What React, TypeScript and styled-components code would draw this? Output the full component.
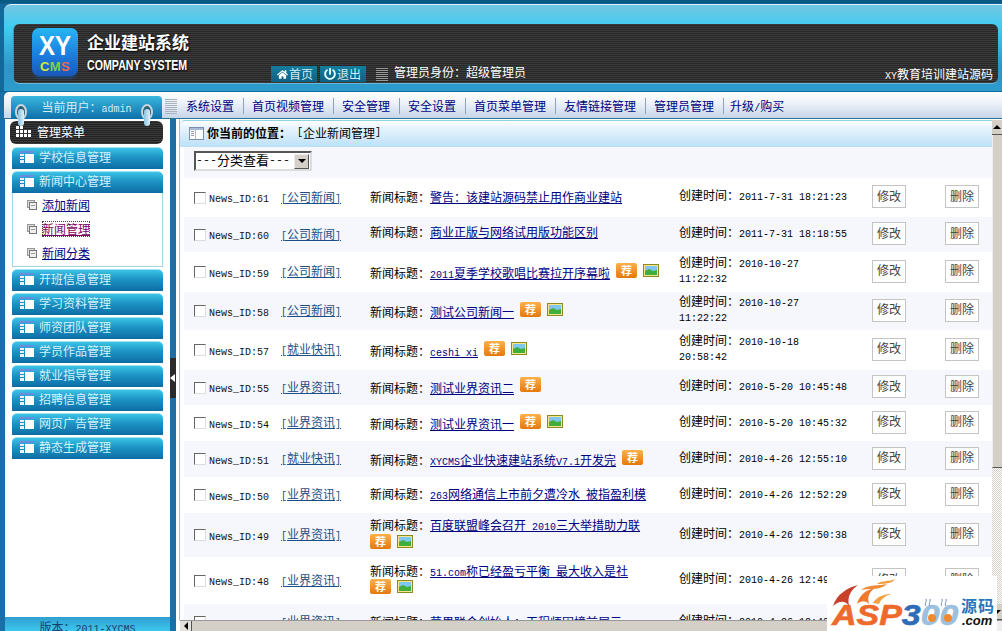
import React from "react";
import styled, { createGlobalStyle } from "styled-components";
import { FaHome, FaPowerOff } from "react-icons/fa";

const CJK = '"Noto Sans CJK SC", "Liberation Sans", sans-serif';

const Global = createGlobalStyle`
  html, body { margin: 0; padding: 0; height: 100%; overflow: hidden; background: #1b6fa8; }
  body { font: 12px/16px ${CJK}; color: #000; }
  * { box-sizing: border-box; }
`;

const Page = styled.div`
  position: relative; width: 1002px; height: 631px; overflow: hidden;
  display: flex; flex-direction: column; background: #1b6fa8;
`;

/* ---------- header ---------- */
const Header = styled.header`
  height: 92px; flex: none; padding-top: 4px;
  background: linear-gradient(#0a5a88 0, #0a5a88 3px, #14699c 4px, #14699c 100%);
`;
const HeaderPanel = styled.div`
  margin-left: 4px; height: 87px; padding: 19px 4px 7px 9px;
  border-radius: 7px 0 0 0; border-top: 1px solid #d8f3fb;
  background: linear-gradient(#74c6e2 0, #3fcdf1 22px, #2d95c8 62px, #2c9ccd 100%);
`;
const Band = styled.div`
  position: relative; height: 60px; display: flex; align-items: flex-end;
  border-radius: 6px; border-bottom: 1px solid #6bb7d8; border-left: 1px solid #4a8ca8;
  background: repeating-linear-gradient(0deg, #3b3b3b 0 1px, #272727 1px 2px);
`;
const Logo = styled.div`
  align-self: flex-start; margin: 4px 0 0 18px; width: 46px; height: 48px; flex: none;
  display: flex; flex-direction: column; align-items: center; border-radius: 7px;
  background: linear-gradient(#27b6f2 0, #1b7fe0 55%, #1a57b8 100%);
  font-family: "Liberation Sans", sans-serif; font-weight: 700;
  box-shadow: 0 5px 4px -3px #174f86;
`;
const LogoXY = styled.span`font-size: 24px; line-height: 29px; margin-top: 3px; color: #fff; transform: scaleY(1.15);`;
const LogoCMS = styled.span`font-size: 13px; line-height: 13px; letter-spacing: .4px;`;
const LogoLetter = styled.span<{ $c: string }>`color: ${p => p.$c};`;
const Brand = styled.div`
  align-self: flex-start; margin: 9px 0 0 9px; width: 104px; flex: none; color: #fff;
  text-shadow: 1px 1px 2px #000;
`;
const BrandCn = styled.div`font-size: 17px; line-height: 18px; font-weight: 700; white-space: nowrap;`;
const BrandEn = styled.div`
  margin-top: 6px; font: 700 15px/16px "Liberation Sans", sans-serif;
  transform: scaleX(.71); transform-origin: left; white-space: nowrap;
`;
const HeadButton = styled.a`
  display: flex; align-items: center; gap: 1px; width: 46px; height: 16px; margin-bottom: 1px;
  padding-left: 6px; color: #cdeefa; font-size: 12px;
  background: linear-gradient(#167d9d, #0d5f80);
`;
const HomeBtn = styled(HeadButton)`margin-left: 80px;`;
const ExitBtn = styled(HeadButton)`margin-left: 3px; padding-left: 4px;`;
const GripIcon = styled.svg`margin: 0 6px 2px 10px; flex: none;`;
const Role = styled.div`color: #fff; margin-bottom: 3px; white-space: nowrap;`;
const Slogan = styled.div`margin: 0 5px 1px auto; color: #fff; white-space: nowrap;`;

/* ---------- nav row ---------- */
const NavRow = styled.div`
  margin-left: 4px; height: 27px; flex: none; display: flex; align-items: flex-end;
  border-radius: 5px 0 0 0; position: relative;
  background: linear-gradient(#ffffff, #eef3f9 40%, #c7d5e8);
  border-bottom: 1px solid #2e7390;
`;
const UserTab = styled.div`
  position: relative; width: 151px; height: 23px; margin-left: 7px; flex: none; margin-bottom: -1px;
  border-radius: 4px 4px 0 0; text-align: center; color: #cfeefa; line-height: 21px;
  background: linear-gradient(#38b7e0, #0f6fa8);
`;
const Hook = styled.span<{ $left: number }>`
  position: absolute; left: ${p => p.$left}px; top: 8px; width: 12px; height: 22px; z-index: 2;
  &::before { content: ""; position: absolute; inset: 0 0 auto 0; height: 12px; border-radius: 50%;
    border: 2px solid #c8d4da; background: #2c5f78; }
  &::after { content: ""; position: absolute; left: 3px; top: 5px; width: 6px; height: 17px; border-radius: 3px;
    background: linear-gradient(90deg, #8cc2e0, #e0f0f8); }
`;
const NavGrip = styled.svg`flex: none; margin: 0 9px 4px 3px;`;
const NavList = styled.nav`display: flex; align-self: center; padding-top: 2px;`;
const NavItem = styled.a`
  color: #00007f; padding-right: 9px; margin-right: 8px; border-right: 1px solid #8fa3b8;
  white-space: nowrap; &:last-child { border: 0; margin-left: -2px; }
`;

/* ---------- body ---------- */
const Body = styled.div`flex: 1; min-height: 0; display: flex;`;
const Sidebar = styled.aside`
  width: 165px; margin-left: 5px; flex: none; background: #fff; display: flex; flex-direction: column; padding-top: 2px;
`;
const MenuHead = styled.div`
  width: 153px; height: 23px; margin: 0 0 3px 5px; flex: none; display: flex; align-items: center; gap: 5px;
  padding: 0 0 2px 6px; border-radius: 6px; color: #fff;
  background: repeating-linear-gradient(0deg, #3a3a3a 0 1px, #222 1px 2px);
`;
const MenuList = styled.div`flex: 1; margin-left: 7px; width: 151px; display: flex; flex-direction: column; gap: 2px;`;
const MenuItem = styled.div`
  height: 22px; flex: none; display: flex; align-items: center; gap: 5px; padding: 0 0 3px 8px;
  border-radius: 5px 5px 0 0; color: #d4f1fb; border-top: 1px solid #9fe3f5;
  background: linear-gradient(#3cc3e6, #1d93c4 45%, #0c6da5);
`;
const SubBox = styled.div`
  height: 74px; margin-top: -2px; padding: 0 0 0 14px; flex: none; background: #fff;
  border: 1px solid #a6d4e8; border-top: 0; display: flex; flex-direction: column;
`;
const SubItem = styled.div`height: 24px; display: flex; align-items: center; gap: 5px;`;
const SubLink = styled.a<{ $visited?: boolean }>`
  color: ${p => p.$visited ? "#800060" : "#00007f"}; text-decoration: underline;
  ${p => p.$visited && "outline: 1px dotted #444; outline-offset: -1px;"}
`;
const SideFoot = styled.div`
  height: 14px; flex: none; overflow: hidden; padding-top: 2px; text-align: center; color: #16406a; line-height: 16px;
  background: linear-gradient(#2f9fd0, #3cc7ee);
`;
const Rail = styled.div`width: 6px; flex: none; display: flex; align-items: center; padding-top: 5px;`;
const Collapse = styled.div`
  width: 6px; height: 40px; background: #2b2b2b; display: flex; align-items: center;
  &::before { content: ""; border: 4px solid transparent; border-left: 0; border-right: 5px solid #fff; }
`;
const Main = styled.main`flex: 1; min-width: 0; background: #fff; display: flex; flex-direction: column;`;
const MainTop = styled.div`flex: 1; min-height: 0; display: flex;`;
const Content = styled.div`
  flex: 1; min-width: 0; margin-left: 3px; border-left: 1px solid #b4bcc4; display: flex; flex-direction: column;
`;
const TitleBar = styled.div`
  height: 27px; margin-top: 1px; flex: none; display: flex; align-items: center; padding: 0 0 2px 9px; border-radius: 5px 0 0 0;
  background: linear-gradient(#fff, #e8f4fd 25%, #bce0f8); border-top: 1px solid #8fd4e8;
`;
const TitleIcon = styled.svg`flex: none; margin-right: 3px;`;
const Crumb = styled.strong`font-weight: 700; margin-right: 6px; font-size: 12px;`;
const List = styled.div`flex: 1; min-height: 0; overflow: hidden; margin-left: 4px;`;
const FilterRow = styled.div`height: 31px; background: #f5f7fd; padding: 4px 0 0 10px;`;
const Select = styled.div`
  width: 118px; height: 20px; display: flex; align-items: center; padding: 0 2px 2px 0;
  background: #fff; border: 2px solid; border-color: #555 #ddd #ddd #555; font-size: 13px; line-height: 16px; overflow: hidden;
  white-space: nowrap;
`;
const SelectDash = styled.span`font: 11.67px/16px "Liberation Mono", monospace;`;
const SelectArrow = styled.span`
  width: 15px; height: 15px; flex: none; margin: 2px -1px 0 auto; background: #d4d0c8; border: 1px solid; border-color: #eee #555 #555 #eee;
  display: flex; align-items: center; justify-content: center;
  &::after { content: ""; border: 4px solid transparent; border-top: 4px solid #000; border-bottom: 0; }
`;
const Row = styled.div<{ $h: number; $tint: boolean }>`
  height: ${p => p.$h}px; display: grid; align-items: center;
  grid-template-columns: 15px 72px 89px 309px 193px 73px 34px; padding-left: 10px;
  background: ${p => p.$tint ? "#f5f7fd" : "#fff"};
`;
const Check = styled.input.attrs({ type: "checkbox" })`
  appearance: none; margin: 0; width: 12px; height: 12px; background: #fff;
  border: 1px solid; border-color: #666 #ddd #ddd #666;
`;
const IdText = styled.span`
  font: 10px/12px "Liberation Mono", monospace; padding-top: 5px; color: #111; white-space: nowrap;
`;
const CatLink = styled.a`color: #1c4f86; text-decoration: underline; white-space: nowrap; margin-top: -2px;`;
const TitleCell = styled.div<{ $shift: number }>`
  width: 292px; line-height: 16px; margin-top: ${p => p.$shift}px;
`;
const TitleLink = styled.a`color: #00007f; text-decoration: underline;`;
const Lat = styled.span`font-family: "Liberation Mono", monospace; font-size: 10px; line-height: 1;`;
const BadgeWrap = styled.span<{ $own: boolean }>`
  display: inline-flex; align-items: center; gap: 6px; vertical-align: top; height: 16px; white-space: nowrap;
  margin-top: ${p => p.$own ? 0 : -3}px;
`;
const Rec = styled.span`
  width: 21px; height: 15px; border-radius: 2px; color: #fff; font-size: 11px; font-weight: 700; line-height: 15px; text-align: center;
  background: linear-gradient(#fbb14a, #e4780f);
`;
const TimeCell = styled.div`width: 170px; line-height: 14px; margin-top: -4px;`;
const ActionBtn = styled.a`
  width: 34px; height: 23px; display: flex; align-items: center; justify-content: center; padding-bottom: 2px; margin-top: -2px;
  background: #fff; border: 1px solid #c4c4c4; color: #444;
`;
const VScroll = styled.div`width: 10px; flex: none; display: flex; flex-direction: column; padding-top: 1px;`;
const ScrollBtn = styled.div<{ $h: number; $dir: "up" | "down" }>`
  height: ${p => p.$h}px; flex: none; background: #d4d0c8; display: flex; align-items: center; justify-content: center;
  border-bottom: 1px solid #555;
  &::after { content: ""; border: 4px solid transparent; border-${p => p.$dir === "up" ? "top" : "bottom"}: 0;
    border-${p => p.$dir === "up" ? "bottom" : "top"}: 4px solid #000; }
`;
const VThumb = styled.div`height: 333px; flex: none; background: #d4d0c8; border-left: 1px solid #eee; border-bottom: 1px solid #555;`;
const VTrack = styled.div`
  flex: 1; background: repeating-conic-gradient(#fff 0 25%, #d4d0c8 0 50%) 0 0 / 2px 2px;
`;
const HScroll = styled.div`
  height: 11px; flex: none; margin-left: 4px; display: flex; background: #d4d0c8; border-top: 1px solid #999;
`;
const HBtn = styled.div`
  width: 12px; flex: none; display: flex; align-items: center; justify-content: center; border-right: 1px solid #555; background: #e4e1da;
  &::after { content: ""; border: 4px solid transparent; border-left: 0; border-right: 4px solid #000; }
`;
const HCorner = styled.div`width: 10px; flex: none; background: #eee;`;
const HThumb = styled.div`flex: 1;`;

/* ---------- watermark ---------- */
const Mark = styled.div`
  position: absolute; right: 5px; bottom: 0; width: 170px; height: 55px; background: #fff; overflow: hidden;
  font-family: "Liberation Sans", sans-serif;
`;
const MarkFlame = styled.svg`position: absolute; left: 0; top: 0;`;
const MarkWord = styled.div`
  position: absolute; left: 5px; bottom: 3px; font-size: 29px; line-height: 26px; font-weight: 700; font-style: italic;
  white-space: nowrap; transform: scaleX(1.17); transform-origin: left; -webkit-text-stroke: .6px currentColor;
`;
const MarkAsp = styled.span`color: #ee6a2c;`;
const Mark3 = styled.span`color: #2f6cb8;`;
const Mark0 = styled.span`color: #9cc0de;`;
const MarkCn = styled.div`
  position: absolute; left: 134px; top: 19px; font: 700 16px/20px ${CJK}; color: #2a78bc; letter-spacing: 1px;
`;
const MarkCom = styled.div`
  position: absolute; left: 135px; bottom: 3px; font-size: 13px; line-height: 14px; font-weight: 700; font-style: italic; color: #111;
`;

const mixed = (t: string) =>
  t.split(/([\x20-\x7e]+)/).map((s, i) => (i % 2 ? <Lat key={i}>{s}</Lat> : s));

const BookIcon = () => (
  <svg width="14" height="12" viewBox="0 0 14 12" style={{ flex: "none" }}>
    <rect x="0" y="0" width="14" height="2" fill="#6f88e0" />
    <rect x="0" y="3" width="4" height="2" fill="#eef" />
    <rect x="0" y="6" width="4" height="2" fill="#eef" />
    <rect x="0" y="9" width="4" height="3" fill="#eef" />
    <rect x="5" y="3" width="9" height="9" fill="#fff" />
  </svg>
);
const SubIcon = () => (
  <svg width="10" height="10" viewBox="0 0 10 10" style={{ flex: "none" }}>
    <rect x=".5" y=".5" width="7" height="7" fill="#ddd" stroke="#999" />
    <rect x="2.5" y="2.5" width="7" height="7" fill="#eee" stroke="#777" />
    <rect x="4" y="5" width="4" height="1" fill="#999" />
  </svg>
);
const Grip = ({ c }: { c: string }) => (
  <>
    {[0, 2, 4, 6, 8, 10, 12].map(y => <rect key={y} x="0" y={y} width="12" height="1" fill={c} />)}
  </>
);
const PicIcon = () => (
  <svg width="16" height="13" viewBox="0 0 16 13" style={{ flex: "none" }}>
    <rect x=".5" y=".5" width="15" height="12" fill="#f6e58a" stroke="#8a8a20" />
    <rect x="2" y="2" width="12" height="5" fill="#7fc6f0" />
    <path d="M2 11V7l4-2 4 2 4-1v5z" fill="#3fae3c" />
  </svg>
);

type News = {
  id: string; cat: string; title: string; time: string; h: number; shift: number;
  rec?: boolean; pic?: boolean; ownLine?: boolean;
};
const news: News[] = [
  { id: "61", cat: "公司新闻", title: "警告：该建站源码禁止用作商业建站", time: "2011-7-31 18:21:23", h: 39, shift: -2 },
  { id: "60", cat: "公司新闻", title: "商业正版与网络试用版功能区别", time: "2011-7-31 18:18:55", h: 35, shift: -6 },
  { id: "59", cat: "公司新闻", title: "2011夏季学校歌唱比赛拉开序幕啦", time: "2010-10-27 11:22:32", h: 40, shift: 2, rec: true, pic: true },
  { id: "58", cat: "公司新闻", title: "测试公司新闻一", time: "2010-10-27 11:22:22", h: 38, shift: 2, rec: true, pic: true },
  { id: "57", cat: "就业快讯", title: "ceshi xi", time: "2010-10-18 20:58:42", h: 40, shift: 2, rec: true, pic: true },
  { id: "55", cat: "业界资讯", title: "测试业界资讯二", time: "2010-5-20 10:45:48", h: 35, shift: 0, rec: true },
  { id: "54", cat: "业界资讯", title: "测试业界资讯一", time: "2010-5-20 10:45:32", h: 36, shift: 2, rec: true, pic: true },
  { id: "51", cat: "就业快讯", title: "XYCMS企业快速建站系统V7.1开发完", time: "2010-4-26 12:55:10", h: 36, shift: 2, rec: true },
  { id: "50", cat: "业界资讯", title: "263网络通信上市前夕遭冷水 被指盈利模", time: "2010-4-26 12:52:29", h: 36, shift: -2 },
  { id: "49", cat: "业界资讯", title: "百度联盟峰会召开 2010三大举措助力联", time: "2010-4-26 12:50:38", h: 44, shift: -4, rec: true, pic: true, ownLine: true },
  { id: "48", cat: "业界资讯", title: "51.com称已经盈亏平衡 最大收入是社", time: "2010-4-26 12:49:25", h: 47, shift: -4, rec: true, pic: true, ownLine: true },
  { id: "47", cat: "业界资讯", title: "苹果联合创始人：工程师困境前展示:P.1", time: "2010-4-26 12:48:16", h: 36, shift: 0 },
];
const menusTop = ["学校信息管理"];
const menusBottom = ["开班信息管理", "学习资料管理", "师资团队管理", "学员作品管理", "就业指导管理", "招聘信息管理", "网页广告管理", "静态生成管理"];
const navs = ["系统设置", "首页视频管理", "安全管理", "安全设置", "首页菜单管理", "友情链接管理", "管理员管理", "升级/购买"];

export default function App() {
  return (
    <Page>
      <Global />
      <Header>
        <HeaderPanel>
          <Band>
            <Logo>
              <LogoXY>XY</LogoXY>
              <LogoCMS>
                <LogoLetter $c="#d8ea35">C</LogoLetter>
                <LogoLetter $c="#7ed23f">M</LogoLetter>
                <LogoLetter $c="#ee6a48">S</LogoLetter>
              </LogoCMS>
            </Logo>
            <Brand>
              <BrandCn>企业建站系统</BrandCn>
              <BrandEn>COMPANY SYSTEM</BrandEn>
            </Brand>
            <HomeBtn><FaHome size={11} color="#fff" />首页</HomeBtn>
            <ExitBtn><FaPowerOff size={12} color="#dff" />退出</ExitBtn>
            <GripIcon width="12" height="13" viewBox="0 0 12 13"><Grip c="#999" /></GripIcon>
            <Role>管理员身份：超级管理员</Role>
            <Slogan><Lat>XY</Lat>教育培训建站源码</Slogan>
          </Band>
        </HeaderPanel>
      </Header>

      <NavRow>
        <UserTab>
          当前用户：<Lat>admin</Lat>
          <Hook $left={4} />
          <Hook $left={130} />
        </UserTab>
        <NavGrip width="12" height="15" viewBox="0 0 12 15"><Grip c="#aab2bc" /><rect y="14" width="12" height="1" fill="#aab2bc" /></NavGrip>
        <NavList>
          {navs.map(n => <NavItem key={n}>{mixed(n)}</NavItem>)}
        </NavList>
      </NavRow>

      <Body>
        <Sidebar>
          <MenuHead>
            <svg width="16" height="12" viewBox="0 0 16 12" style={{ flex: "none" }}>
              {[0, 4, 8].flatMap(y => [0, 4, 8, 12].map(x =>
                (y === 0 && x > 4) ? null : <rect key={`${x}-${y}`} x={x} y={y} width="3" height="3" fill="#fff" />
              ))}
            </svg>
            管理菜单
          </MenuHead>
          <MenuList>
            {menusTop.map(m => <MenuItem key={m}><BookIcon />{m}</MenuItem>)}
            <MenuItem><BookIcon />新闻中心管理</MenuItem>
            <SubBox>
              <SubItem><SubIcon /><SubLink>添加新闻</SubLink></SubItem>
              <SubItem><SubIcon /><SubLink $visited>新闻管理</SubLink></SubItem>
              <SubItem><SubIcon /><SubLink>新闻分类</SubLink></SubItem>
            </SubBox>
            {menusBottom.map(m => <MenuItem key={m}><BookIcon />{m}</MenuItem>)}
          </MenuList>
          <SideFoot>版本：<Lat>2011-XYCMS</Lat></SideFoot>
        </Sidebar>
        <Rail><Collapse /></Rail>
        <Main>
          <MainTop>
            <Content>
              <TitleBar>
                <TitleIcon width="15" height="13" viewBox="0 0 15 13">
                  <rect x=".5" y=".5" width="14" height="12" fill="#fff" stroke="#7d8fa8" />
                  <rect x="1" y="1" width="13" height="2" fill="#a8bcd8" />
                  <rect x="2" y="4" width="3" height="1" fill="#99a" />
                  <rect x="2" y="6" width="3" height="1" fill="#99a" />
                  <rect x="2" y="8" width="3" height="1" fill="#99a" />
                  <rect x="6" y="3" width="1" height="9" fill="#a8bcd8" />
                </TitleIcon>
                <Crumb>你当前的位置：</Crumb>
                {mixed("[企业新闻管理]")}
              </TitleBar>
              <List>
                <FilterRow>
                  <Select><SelectDash>---</SelectDash>分类查看<SelectDash>---</SelectDash><SelectArrow /></Select>
                </FilterRow>
                {news.map((n, i) => (
                  <Row key={n.id} $h={n.h} $tint={i % 2 === 1}>
                    <Check />
                    <IdText>News_ID:{n.id}</IdText>
                    <CatLink>{mixed(`[${n.cat}]`)}</CatLink>
                    <TitleCell $shift={n.shift}>
                      新闻标题：<TitleLink>{mixed(n.title)}</TitleLink>
                      {n.rec && <Lat> </Lat>}
                      {n.rec && (
                        <BadgeWrap $own={!!n.ownLine}>
                          <Rec>荐</Rec>
                          {n.pic && <PicIcon />}
                        </BadgeWrap>
                      )}
                    </TitleCell>
                    <TimeCell>创建时间：{mixed(n.time)}</TimeCell>
                    <ActionBtn>修改</ActionBtn>
                    <ActionBtn>删除</ActionBtn>
                  </Row>
                ))}
              </List>
            </Content>
            <VScroll>
              <ScrollBtn $h={15} $dir="up" />
              <VThumb />
              <VTrack />
              <ScrollBtn $h={16} $dir="down" />
            </VScroll>
          </MainTop>
          <HScroll>
            <HBtn />
            <HThumb />
            <HCorner />
          </HScroll>
        </Main>
      </Body>

      <Mark>
        <MarkWord>
          <MarkAsp>ASP</MarkAsp><Mark3>3</Mark3><Mark0>00</Mark0>
        </MarkWord>
        <MarkFlame width="170" height="55" viewBox="0 0 170 55">
          <path d="M6 30C10 18 20 12 31 9 24 14 20 20 22 30 18 24 12 25 6 30Z" fill="#c8402a" />
          <path d="M30 28C32 20 38 14 48 12 42 16 40 21 42 28 38 24 34 25 30 28Z" fill="#ee7a30" />
          <path d="M34 14C42 8 52 10 60 8 56 12 50 13 44 13 42 13 38 13 34 14Z" fill="#f08a34" />
          <path d="M50 8C54 4 62 6 68 3 66 7 60 8 50 8Z" fill="#f0a040" />
          <path d="M46 27C50 20 58 18 64 18 58 20 54 23 52 28Z" fill="#f4a040" />
          <circle cx="105" cy="42" r="4" fill="#f08a30" />
          <circle cx="121" cy="42" r="4" fill="#f08a30" />
          <path d="M99 30c-2-3 1-4 0-7M103 30c-2-3 1-4 0-7M115 30c-2-3 1-4 0-7M119 30c-2-3 1-4 0-7" fill="none" stroke="#6a90b8" strokeWidth="1" />
        </MarkFlame>
        <MarkCn>源码</MarkCn>
        <MarkCom>.com</MarkCom>
      </Mark>
    </Page>
  );
}
